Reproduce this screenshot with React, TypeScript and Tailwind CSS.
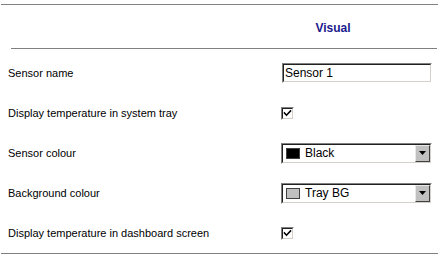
import React from 'react'

function Sunken({ className, children }: { className?: string; children?: React.ReactNode }) {
  // classic win32 sunken edge: dark top/left, light bottom/right
  return (
    <div className={`border border-t-[#808080] border-l-[#808080] border-b-white border-r-white ${className ?? ''}`}>
      <div className="h-full border border-t-[#202020] border-l-[#202020] border-b-[#d4d0c8] border-r-[#d4d0c8] bg-white">
        {children}
      </div>
    </div>
  )
}

function Checkbox() {
  return (
    <Sunken className="w-[13px] h-[13px]">
      <svg viewBox="0 0 9 9" className="w-[9px] h-[9px]">
        <path d="M1.5 4 L3.5 6.2 L7.5 2" fill="none" stroke="#000" strokeWidth={1.6} strokeLinecap="square" />
      </svg>
    </Sunken>
  )
}

function ColourSelect({ swatch, label }: { swatch: string; label: string }) {
  return (
    <Sunken className="w-[151px] h-[21px]">
      <div className="flex h-full items-center">
        <div className={`ml-[3px] w-[14px] h-[11px] border border-[#404040] ${swatch}`} />
        <span className="ml-[5px] flex-1 text-[12px] leading-none">{label}</span>
        <div className="h-full w-[15px] flex items-center justify-center bg-[#c0c0c0] border border-t-[#e8e8e8] border-l-[#e8e8e8] border-b-[#404040] border-r-[#404040]">
          <svg viewBox="0 0 7 4" className="w-[7px] h-[4px]">
            <path d="M0 0 H7 L3.5 4 Z" fill="#000" />
          </svg>
        </div>
      </div>
    </Sunken>
  )
}

function Row({ label, children }: { label: string; children: React.ReactNode }) {
  return (
    <div className="flex h-[40px] items-center">
      <div className="w-[281px] pl-[8px] text-[11px]">{label}</div>
      <div>{children}</div>
    </div>
  )
}

export default function App() {
  return (
    <div className="w-[446px] h-[256px] bg-white pt-[4px] text-black font-['Liberation_Sans',Arial,sans-serif]">
      <div className="ml-[1px] w-[437px] border-t border-[#808080]" />

      <div className="flex h-[43px] items-center pt-[3px]">
        <div className="ml-[222px] w-[222px] text-center text-[12px] font-bold text-[#1a1a8c]">Visual</div>
      </div>

      <div className="ml-[11px] w-[426px] border-t border-[#808080]" />

      <div className="pt-[4px]">
        <Row label="Sensor name">
          <Sunken className="ml-[1px] w-[150px] h-[20px]">
            <div className="pl-[1px] text-[12px] leading-[16px]">Sensor 1</div>
          </Sunken>
        </Row>
        <Row label="Display temperature in system tray">
          <Checkbox />
        </Row>
        <Row label="Sensor colour">
          <ColourSelect swatch="bg-black" label="Black" />
        </Row>
        <Row label="Background colour">
          <ColourSelect swatch="bg-[#c0c0c0]" label="Tray BG" />
        </Row>
        <Row label="Display temperature in dashboard screen">
          <Checkbox />
        </Row>
      </div>

      <div className="ml-[1px] w-[437px] border-t border-[#808080]" />
    </div>
  )
}
